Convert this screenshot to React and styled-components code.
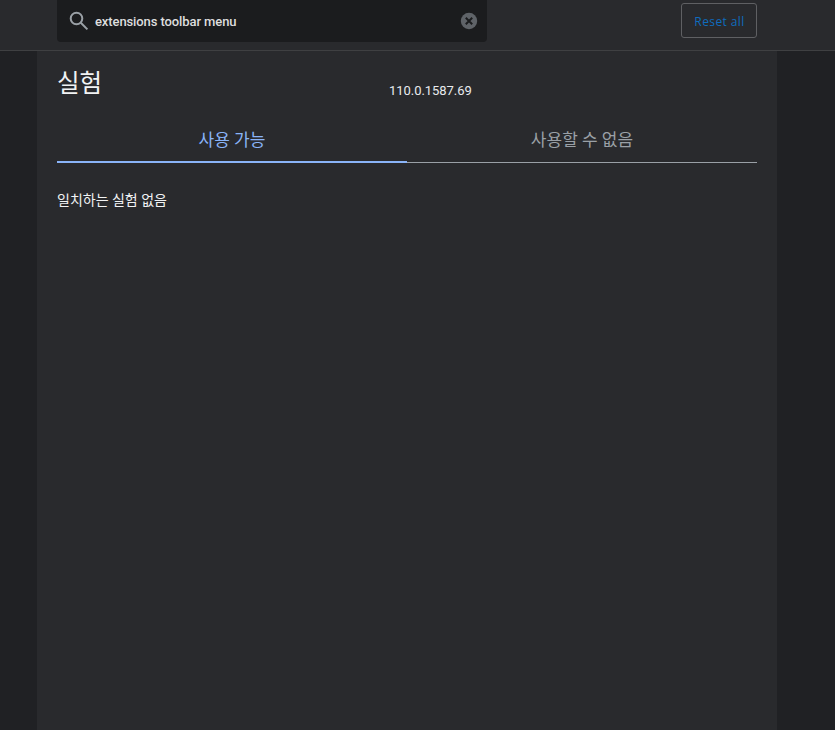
import React from "react";
import styled, { createGlobalStyle } from "styled-components";

const GlobalStyle = createGlobalStyle`
  html, body {
    margin: 0;
    padding: 0;
    height: 100%;
    background: #202124;
    overflow: hidden;
  }
  #root {
    height: 100%;
  }
`;

const Page = styled.div`
  display: flex;
  flex-direction: column;
  height: 730px;
  font-family: Roboto, "Noto Sans CJK KR", sans-serif;
`;

const Header = styled.header`
  display: flex;
  justify-content: space-between;
  align-items: flex-start;
  height: 50px;
  padding: 0 78px 0 57px;
  background: #292a2d;
  border-bottom: 1px solid #3f4042;
  flex-shrink: 0;
`;

const SearchBox = styled.div`
  display: flex;
  align-items: center;
  width: 430px;
  height: 42px;
  padding: 0 9px 0 12px;
  box-sizing: border-box;
  background: #1b1c1e;
  border-radius: 0 0 4px 4px;
`;

const SearchText = styled.span`
  flex: 1;
  margin-left: 6px;
  color: #dedede;
  font-size: 13px;
  font-weight: 500;
  letter-spacing: -0.1px;
`;

const ResetButton = styled.button`
  width: 76px;
  height: 35px;
  margin-top: 3px;
  padding: 1px 0 0 1px;
  background: transparent;
  border: 1px solid #5f6063;
  border-radius: 3px;
  color: #0f6cbd;
  font-family: "Open Sans", sans-serif;
  font-size: 12px;
  letter-spacing: 0.4px;
`;

const Body = styled.main`
  flex: 1;
  width: 700px;
  margin-left: 37px;
  padding: 0 20px;
  background: #292a2d;
`;

const TitleRow = styled.div`
  display: grid;
  grid-template-columns: 332px 1fr;
  height: 66px;
`;

const Title = styled.h1`
  margin: 17px 0 0;
  color: #f1f3f4;
  font-size: 24.5px;
  font-weight: 400;
  line-height: 32px;
`;

const Version = styled.span`
  margin-top: 32px;
  color: #e8eaed;
  font-size: 13px;
  font-weight: 400;
  line-height: 16px;
  letter-spacing: -0.05px;
`;

const Tabs = styled.div`
  display: flex;
  height: 46px;
  box-sizing: border-box;
  border-bottom: 1px solid #9aa0a6;
`;

const Tab = styled.div`
  flex: 1;
  height: 46px;
  box-sizing: border-box;
  padding-top: 11px;
  border-bottom: ${(props) => (props.$active ? "2px solid #8ab4f8" : "none")};
  color: ${(props) => (props.$active ? "#8ab4f8" : "#9aa0a6")};
  font-size: 17px;
  line-height: 24px;
  text-align: center;
`;

const EmptyText = styled.p`
  margin: 27px 0 0;
  color: #f1f3f4;
  font-size: 14px;
  line-height: 20px;
`;

const SearchIcon = () => (
  <svg width="20" height="20" viewBox="0 0 20 20" fill="none" stroke="#9aa0a6" strokeWidth="2">
    <circle cx="7.5" cy="7.5" r="5.8" />
    <path d="M11.8 11.8 L18.4 18.4" />
  </svg>
);

const ClearIcon = () => (
  <svg width="18" height="18" viewBox="0 0 18 18">
    <circle cx="9" cy="9" r="8.2" fill="#5f6368" />
    <path d="M5.8 5.8 L12.2 12.2 M12.2 5.8 L5.8 12.2" stroke="#1b1c1e" strokeWidth="2" />
  </svg>
);

export default function App() {
  return (
    <Page>
      <GlobalStyle />
      <Header>
        <SearchBox>
          <SearchIcon />
          <SearchText>extensions toolbar menu</SearchText>
          <ClearIcon />
        </SearchBox>
        <ResetButton>Reset all</ResetButton>
      </Header>
      <Body>
        <TitleRow>
          <Title>실험</Title>
          <Version>110.0.1587.69</Version>
        </TitleRow>
        <Tabs>
          <Tab $active>사용 가능</Tab>
          <Tab>사용할 수 없음</Tab>
        </Tabs>
        <EmptyText>일치하는 실험 없음</EmptyText>
      </Body>
    </Page>
  );
}
